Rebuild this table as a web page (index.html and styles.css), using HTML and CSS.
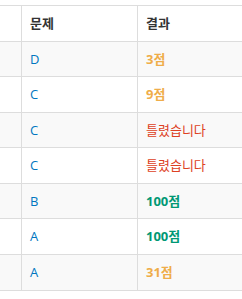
FILE: index.html
```html
<!DOCTYPE html>
<html>
<head>
<meta charset="utf-8">
<link rel="stylesheet" href="styles.css">
</head>
<body>
<div class="wrap">
<table class="status">
<colgroup><col class="c1"><col class="c2"><col class="c3"></colgroup>
<thead>
<tr><th></th><th>문제</th><th>결과</th></tr>
</thead>
<tbody>
<tr><td></td><td><a class="prob">D</a></td><td><span class="pac">3점</span></td></tr>
<tr><td></td><td><a class="prob">C</a></td><td><span class="pac">9점</span></td></tr>
<tr><td></td><td><a class="prob">C</a></td><td><span class="wa">틀렸습니다</span></td></tr>
<tr><td></td><td><a class="prob">C</a></td><td><span class="wa">틀렸습니다</span></td></tr>
<tr><td></td><td><a class="prob">B</a></td><td><span class="ac">100점</span></td></tr>
<tr><td></td><td><a class="prob">A</a></td><td><span class="ac">100점</span></td></tr>
<tr><td></td><td><a class="prob">A</a></td><td><span class="pac">31점</span></td></tr>
</tbody>
</table>
</div>
</body>
</html>
```

FILE: styles.css
```css
html, body {
  margin: 0;
  padding: 0;
  background: #fff;
}
body {
  font-family: "Open Sans", "Noto Sans CJK KR", sans-serif;
  font-size: 13px;
  line-height: 1.42857;
  color: #333;
  overflow: hidden;
}
.wrap {
  padding-top: 5px;
  overflow: hidden;
  width: 242px;
}
.status {
  border-spacing: 0;
  table-layout: fixed;
  width: 377px;
  margin-left: -40px;
  border-bottom: 1px solid #ddd;
}
.c1 { width: 61px; }
.c2 { width: 116px; }
.c3 { width: 200px; }
.status th,
.status td {
  border-top: 1px solid #ddd;
  border-left: 1px solid #ddd;
  padding: 8px;
  text-align: left;
  vertical-align: top;
  white-space: nowrap;
}
.status th {
  font-weight: bold;
  color: #333;
}
.status tbody tr:nth-child(odd) {
  background: #f9f9f9;
}
.prob {
  color: #0076c0;
  text-decoration: none;
}
.pac {
  color: #efad4a;
  font-weight: bold;
}
.ac {
  color: #009874;
  font-weight: bold;
}
.wa {
  color: #dd4124;
}
```
